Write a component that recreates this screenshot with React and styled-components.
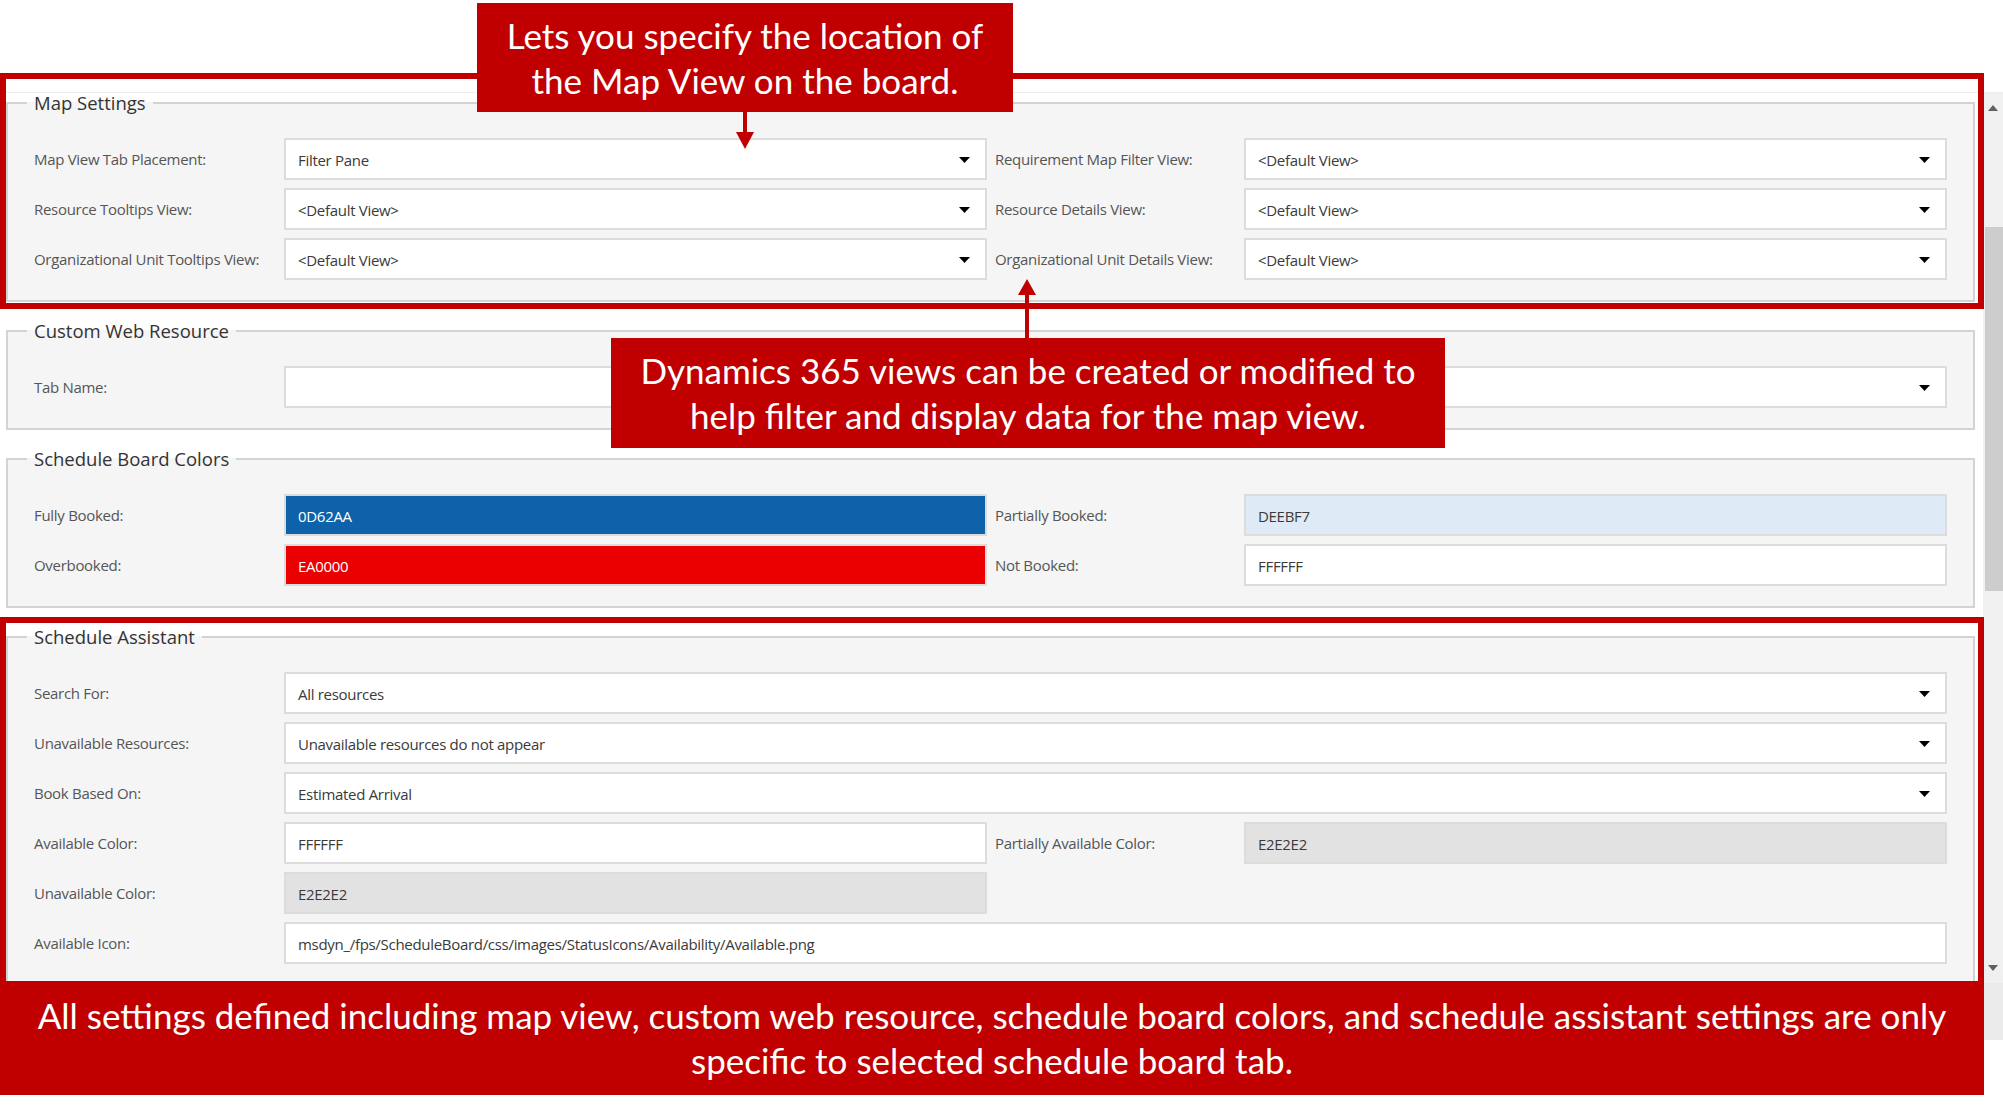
import React from 'react';
import styled, { createGlobalStyle } from 'styled-components';

const GlobalStyle = createGlobalStyle`
    html, body {
        margin: 0;
        padding: 0;
        background: #ffffff;
    }
    body {
        font-family: "Open Sans", "Noto Sans", Arial, sans-serif;
    }
`;

const Page = styled.div`
    position: relative;
    width: 2003px;
    height: 1108px;
    overflow: hidden;
    background: #ffffff;
`;

const TopBand = styled.div`
    height: 92px;
    border-bottom: 1px solid #ececec;
`;

const Viewport = styled.div`
    display: flex;
    height: 947px;
`;

const Content = styled.div`
    flex: 1;
    overflow: hidden;
    padding: 0 8px 0 6px;
    background: #ffffff;
`;

const Fieldset = styled.fieldset`
    margin: 0 0 19px;
    padding: 25px 26px 20px;
    border: 2px solid #d3d3d3;
    background: #f5f5f5;
    min-width: 0;
`;

const Legend = styled.legend`
    margin-left: -7px;
    padding: 0 7px;
    font-size: 18.5px;
    line-height: 20px;
    color: #333333;
`;

const Rows = styled.div`
    display: flex;
    flex-direction: column;
    gap: 8px;
`;

const FormRow = styled.div`
    display: grid;
    grid-template-columns: 250px 1fr 257px 1fr;
    height: 42px;
`;

const Label = styled.div`
    display: flex;
    align-items: center;
    padding-left: ${(p) => (p.$right ? '8px' : '0')};
    font-size: 15px;
    letter-spacing: -0.3px;
    color: #555555;
    white-space: nowrap;
`;

const Field = styled.div`
    grid-column: ${(p) => (p.$wide ? 'span 3' : 'span 1')};
    box-sizing: border-box;
    display: flex;
    align-items: center;
    justify-content: space-between;
    height: 42px;
    padding: 2px 15px 0 12px;
    border: 2px solid #dcdcdc;
    background: ${(p) => p.$bg || '#ffffff'};
    color: ${(p) => p.$color || '#3a3a3a'};
    font-size: 15px;
    letter-spacing: -0.3px;
    white-space: nowrap;
`;

const Scrollbar = styled.div`
    width: 20px;
    display: flex;
    flex-direction: column;
    background: #f0f0f0;
`;

const ScrollButton = styled.div`
    height: 30px;
    display: flex;
    align-items: center;
    justify-content: center;
`;

const Thumb = styled.div`
    margin: 104px 0 0 2px;
    height: 364px;
    background: #cdcdcd;
`;

const ScrollFill = styled.div`
    flex: 1;
`;

const ScrollCorner = styled.div`
    height: 57px;
    background: #ebebeb;
`;

const Frame = styled.div`
    position: absolute;
    left: 0;
    top: ${(p) => p.$top}px;
    width: 1984px;
    height: ${(p) => p.$height}px;
    box-sizing: border-box;
    border: 6px solid #c00000;
    pointer-events: none;
`;

const Callout = styled.div`
    position: absolute;
    left: ${(p) => p.$x}px;
    top: ${(p) => p.$y}px;
    width: ${(p) => p.$w}px;
    height: ${(p) => p.$h}px;
    display: flex;
    align-items: center;
    justify-content: center;
    text-align: center;
    background: #c00000;
    color: #ffffff;
    font-family: Lato, "Open Sans", sans-serif;
    font-size: 35px;
    line-height: 45px;
`;

const ArrowSvg = styled.svg`
    position: absolute;
    left: ${(p) => p.$x}px;
    top: ${(p) => p.$y}px;
`;

function Caret() {
    return (
        <svg width="11" height="6" viewBox="0 0 11 6">
            <polygon points="0,0 11,0 5.5,6" fill="#000000" />
        </svg>
    );
}

function ScrollArrow({ up }) {
    return (
        <svg width="10" height="6" viewBox="0 0 10 6">
            <polygon points={up ? '0,6 10,6 5,0' : '0,0 10,0 5,6'} fill="#606060" />
        </svg>
    );
}

function Select({ value, wide }) {
    return (
        <Field $wide={wide}>
            <span>{value}</span>
            <Caret />
        </Field>
    );
}

function App() {
    return (
        <Page>
            <GlobalStyle />
            <TopBand />
            <Viewport>
                <Content>
                    <Fieldset>
                        <Legend>Map Settings</Legend>
                        <Rows>
                            <FormRow>
                                <Label>Map View Tab Placement:</Label>
                                <Select value="Filter Pane" />
                                <Label $right>Requirement Map Filter View:</Label>
                                <Select value="<Default View>" />
                            </FormRow>
                            <FormRow>
                                <Label>Resource Tooltips View:</Label>
                                <Select value="<Default View>" />
                                <Label $right>Resource Details View:</Label>
                                <Select value="<Default View>" />
                            </FormRow>
                            <FormRow>
                                <Label>Organizational Unit Tooltips View:</Label>
                                <Select value="<Default View>" />
                                <Label $right>Organizational Unit Details View:</Label>
                                <Select value="<Default View>" />
                            </FormRow>
                        </Rows>
                    </Fieldset>

                    <Fieldset>
                        <Legend>Custom Web Resource</Legend>
                        <Rows>
                            <FormRow>
                                <Label>Tab Name:</Label>
                                <Select value="" wide />
                            </FormRow>
                        </Rows>
                    </Fieldset>

                    <Fieldset>
                        <Legend>Schedule Board Colors</Legend>
                        <Rows>
                            <FormRow>
                                <Label>Fully Booked:</Label>
                                <Field $bg="#0d62aa" $color="#ffffff">0D62AA</Field>
                                <Label $right>Partially Booked:</Label>
                                <Field $bg="#deebf7">DEEBF7</Field>
                            </FormRow>
                            <FormRow>
                                <Label>Overbooked:</Label>
                                <Field $bg="#ea0000" $color="#ffffff">EA0000</Field>
                                <Label $right>Not Booked:</Label>
                                <Field>FFFFFF</Field>
                            </FormRow>
                        </Rows>
                    </Fieldset>

                    <Fieldset>
                        <Legend>Schedule Assistant</Legend>
                        <Rows>
                            <FormRow>
                                <Label>Search For:</Label>
                                <Select value="All resources" wide />
                            </FormRow>
                            <FormRow>
                                <Label>Unavailable Resources:</Label>
                                <Select value="Unavailable resources do not appear" wide />
                            </FormRow>
                            <FormRow>
                                <Label>Book Based On:</Label>
                                <Select value="Estimated Arrival" wide />
                            </FormRow>
                            <FormRow>
                                <Label>Available Color:</Label>
                                <Field>FFFFFF</Field>
                                <Label $right>Partially Available Color:</Label>
                                <Field $bg="#e2e2e2">E2E2E2</Field>
                            </FormRow>
                            <FormRow>
                                <Label>Unavailable Color:</Label>
                                <Field $bg="#e2e2e2">E2E2E2</Field>
                            </FormRow>
                            <FormRow>
                                <Label>Available Icon:</Label>
                                <Field $wide>msdyn_/fps/ScheduleBoard/css/images/StatusIcons/Availability/Available.png</Field>
                            </FormRow>
                        </Rows>
                    </Fieldset>
                </Content>
                <Scrollbar>
                    <ScrollButton>
                        <ScrollArrow up />
                    </ScrollButton>
                    <Thumb />
                    <ScrollFill />
                    <ScrollButton>
                        <ScrollArrow />
                    </ScrollButton>
                    <ScrollCorner />
                </Scrollbar>
            </Viewport>

            <Frame $top={73} $height={236} />
            <Frame $top={617} $height={400} />

            <Callout $x={477} $y={3} $w={536} $h={109}>
                Lets you specify the location of
                <br />
                the Map View on the board.
            </Callout>
            <ArrowSvg $x={736} $y={111} width="18" height="38" viewBox="0 0 18 38">
                <rect x="7" y="0" width="4" height="23" fill="#c00000" />
                <polygon points="0,21 18,21 9,38" fill="#c00000" />
            </ArrowSvg>

            <Callout $x={611} $y={338} $w={834} $h={110}>
                Dynamics 365 views can be created or modified to
                <br />
                help filter and display data for the map view.
            </Callout>
            <ArrowSvg $x={1018} $y={279} width="18" height="60" viewBox="0 0 18 60">
                <polygon points="9,0 0,16 18,16" fill="#c00000" />
                <rect x="7" y="14" width="4" height="46" fill="#c00000" />
            </ArrowSvg>

            <Callout $x={0} $y={981} $w={1984} $h={114}>
                All settings defined including map view, custom web resource, schedule board colors, and schedule assistant settings are only
                <br />
                specific to selected schedule board tab.
            </Callout>
        </Page>
    );
}

export default App;
